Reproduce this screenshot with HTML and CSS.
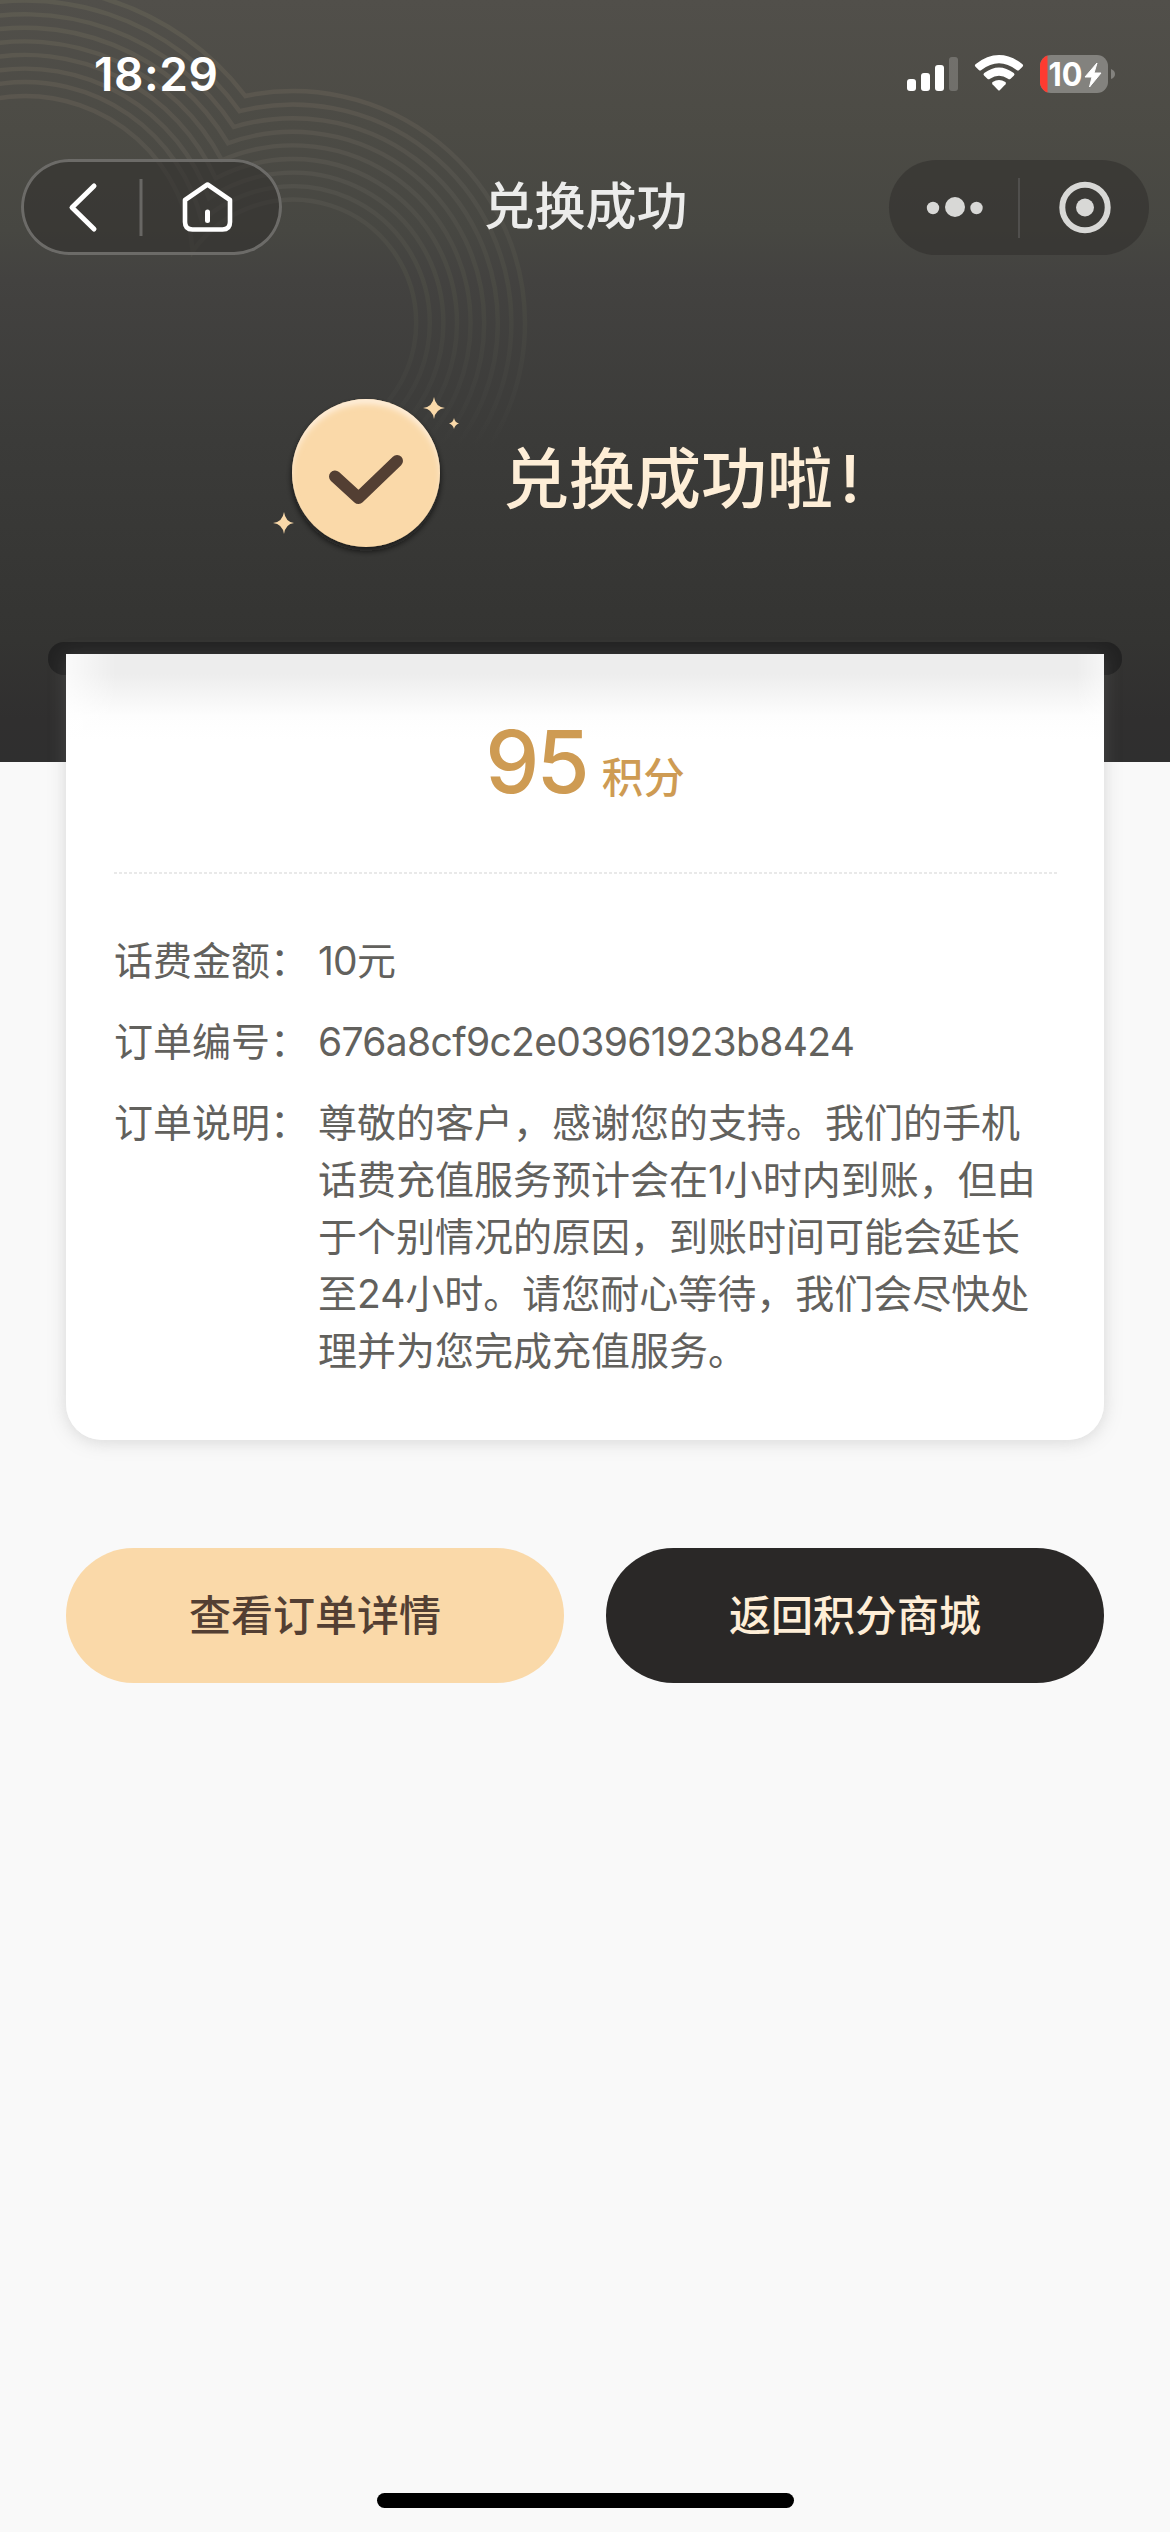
FILE: index.html
```html
<!DOCTYPE html>
<html lang="zh-CN">
<head>
<meta charset="utf-8">
<title>兑换成功</title>
<link rel="stylesheet" href="styles.css">
</head>
<body>
<main class="screen">
  <section class="hero">
    <svg class="rings" width="600" height="480" viewBox="0 0 600 480" aria-hidden="true">
      <defs>
        <linearGradient id="fade" x1="0" y1="0" x2="0" y2="460" gradientUnits="userSpaceOnUse">
          <stop offset="0" stop-color="#5c5a50"/>
          <stop offset=".22" stop-color="#5a564e"/>
          <stop offset=".4" stop-color="#52514b"/>
          <stop offset=".65" stop-color="#484842"/>
          <stop offset=".85" stop-color="#444441" stop-opacity=".5"/>
          <stop offset=".97" stop-color="#444441" stop-opacity="0"/>
        </linearGradient>
      </defs>
      <g fill="none" stroke="url(#fade)" stroke-width="4.4">
        <path d="M-252 264A277 277 0 0 1 245.3 96A232 232 0 0 1 525 323A232 232 0 0 1 293 555"/>
        <path d="M-238.4 264A263.4 263.4 0 0 1 239.6 111.2A218.4 218.4 0 0 1 511.4 323A218.4 218.4 0 0 1 293 541.4"/>
        <path d="M-224.8 264A249.8 249.8 0 0 1 233.8 127A204.8 204.8 0 0 1 497.8 323A204.8 204.8 0 0 1 293 527.8"/>
        <path d="M-211.2 264A236.2 236.2 0 0 1 228 143.2A191.2 191.2 0 0 1 484.2 323A191.2 191.2 0 0 1 293 514.2"/>
        <path d="M-197.6 264A222.6 222.6 0 0 1 221.9 160.2A177.6 177.6 0 0 1 470.6 323A177.6 177.6 0 0 1 293 500.6"/>
        <path d="M-184 264A209 209 0 0 1 215.7 178.4A164 164 0 0 1 457 323A164 164 0 0 1 293 487"/>
        <path d="M-170.4 264A195.4 195.4 0 0 1 209 198.3A150.4 150.4 0 0 1 443.4 323A150.4 150.4 0 0 1 293 473.4"/>
        <path d="M-156.8 264A181.8 181.8 0 0 1 201.7 221.1A136.8 136.8 0 0 1 429.8 323A136.8 136.8 0 0 1 293 459.8"/>
        <path d="M-143.2 264A168.2 168.2 0 0 1 192.7 251.3A123.2 123.2 0 0 1 416.2 323A123.2 123.2 0 0 1 293 446.2"/>
      </g>
    </svg>

    <header class="status">
      <span class="time">18:29</span>
      <svg class="status-icons" width="220" height="46" viewBox="0 0 220 46" role="img" aria-label="信号、Wi-Fi、电量">
        <g fill="#fff">
          <rect x="7" y="27" width="9" height="12" rx="3"/>
          <rect x="21" y="21" width="9" height="18" rx="3"/>
          <rect x="35" y="13" width="9" height="26" rx="3"/>
          <rect x="49" y="5" width="9" height="34" rx="3" opacity=".2"/>
          <path d="M75.500 12.200Q99 -6 122.500 12.200Q123.800 13.500 122.500 14.700L119.200 18Q118 19 116.600 18Q99 4.500 81.400 18Q80 19 78.800 18L75.500 14.700Q74.200 13.500 75.500 12.200Z"/>
          <path d="M84.200 21Q99 9.800 113.800 21Q115.200 22.200 114 23.500L110.600 26.800Q109.400 27.800 108 26.800Q99 20.600 90 26.800Q88.600 27.800 87.400 26.800L84 23.500Q82.800 22.200 84.200 21Z"/>
          <path d="M92.600 30Q99 25.800 105.400 30Q106.600 31 105.500 32.200L100 38Q99 39 98 38L92.500 32.200Q91.400 31 92.600 30Z"/>
        </g>
        <clipPath id="cell"><rect x="140" y="3" width="68" height="38" rx="11"/></clipPath>
        <g clip-path="url(#cell)">
          <rect x="140" y="3" width="68" height="38" fill="#83827e"/>
          <rect x="140" y="3" width="7.500" height="38" fill="#ff3b30"/>
        </g>
        <path d="M211 17Q215 18.500 215 22T211 27Z" fill="#83827e"/>
        <text class="charge" x="148.500" y="34" textLength="34" lengthAdjust="spacingAndGlyphs">10</text>
        <path d="M197 11L185 25H192L189.500 35L201 21H194Z" fill="#fff" stroke="#fff" stroke-width="1" stroke-linejoin="round"/>
      </svg>
    </header>

    <nav class="nav">
      <div class="pill pill-left">
        <svg width="261" height="96" viewBox="0 0 261 96" fill="none" stroke="#fff" stroke-width="5" stroke-linecap="round" stroke-linejoin="round">
          <path d="M73 27L51 48.500L73 70"/>
          <path d="M120 20V77" stroke="#686764" stroke-width="3" stroke-linecap="butt"/>
          <path d="M186.500 25.500L209 41V63Q209 70.500 201.500 70.500H171.500Q164 70.500 164 63V41Z" stroke-width="4.600"/>
          <path d="M186.500 53V61.500"/>
        </svg>
      </div>
      <h1 class="title">兑换成功</h1>
      <div class="pill pill-right">
        <svg width="260" height="95" viewBox="0 0 260 95" fill="#d8d8d6">
          <circle cx="44" cy="48" r="6.200"/>
          <circle cx="66" cy="47" r="10"/>
          <circle cx="87.500" cy="48" r="6.200"/>
          <path d="M130 18V78" stroke="#504f4d" stroke-width="2"/>
          <circle cx="196" cy="47.500" r="22.700" fill="none" stroke="#d8d8d6" stroke-width="6"/>
          <circle cx="196" cy="47.500" r="9"/>
        </svg>
      </div>
    </nav>

    <div class="success">
      <svg width="190" height="176" viewBox="0 0 190 176" aria-hidden="true">
        <defs>
          <filter id="drop" x="-20%" y="-20%" width="140%" height="140%"><feDropShadow dx="0" dy="4" stdDeviation="3" flood-color="#171716" flood-opacity=".75"/></filter>
          <filter id="soft"><feGaussianBlur stdDeviation="3"/></filter>
          <clipPath id="disc"><circle cx="94" cy="83" r="74"/></clipPath>
        </defs>
        <circle cx="94" cy="83" r="74" fill="#fad9a9" filter="url(#drop)"/>
        <g clip-path="url(#disc)"><circle cx="94" cy="89" r="79" fill="none" stroke="#fff2e3" stroke-width="7" filter="url(#soft)"/></g>
        <path d="M63 86.500L86.500 108L125 71" fill="none" stroke="#533f33" stroke-width="12" stroke-linecap="round" stroke-linejoin="round"/>
        <g fill="#fad9a9">
          <path d="M162 7Q163.500 17 173 18Q163.500 19 162 29Q160.500 19 151 18Q160.500 17 162 7Z"/>
          <path d="M182 28Q183 32.500 187 33.500Q183 34.500 182 39Q181 34.500 177 33.500Q181 32.500 182 28Z"/>
          <path d="M12 122Q13.500 132 22 133Q13.500 134 12 144Q10.500 134 1 133Q10.500 132 12 122Z"/>
        </g>
      </svg>
      <p class="success-text">兑换成功啦<span class="bang">!</span></p>
    </div>
    <div class="slot"></div>
  </section>

  <section class="card">
    <p class="points"><span class="points-value">95</span><span class="points-unit">积分</span></p>
    <svg class="divider" width="944" height="2" viewBox="0 0 944 2"><path d="M0 1H944" stroke="#e2e2e2" stroke-width="1.500" stroke-dasharray="3 2"/></svg>
    <dl class="details">
      <dt>话费金额：</dt><dd><span class="amount">10</span>元</dd>
      <dt>订单编号：</dt><dd><span class="order-no">676a8cf9c2e03961923b8424</span></dd>
      <dt>订单说明：</dt>
      <dd>尊敬的客户，感谢您的支持。我们的手机<br>话费充值服务预计会在1小时内到账，但由<br>于个别情况的原因，到账时间可能会延长<br>至24小时。请您耐心等待，我们会尽快处<br>理并为您完成充值服务。</dd>
    </dl>
  </section>

  <div class="actions">
    <button class="btn btn-gold" type="button">查看订单详情</button>
    <button class="btn btn-dark" type="button">返回积分商城</button>
  </div>
  <div class="home-indicator"></div>
</main>
</body>
</html>
```
FILE: styles.css
```css
* { box-sizing: border-box; }

body {
  margin: 0;
  background: #f9f9f9;
  font-family: Inter, "Noto Sans CJK SC", sans-serif;
}

p, h1, dl, dd { margin: 0; }
svg { display: block; flex: none; }

.screen {
  display: flex;
  flex-direction: column;
  width: 1170px;
  height: 2532px;
  overflow: hidden;
}

.hero {
  position: relative;
  display: flex;
  flex-direction: column;
  flex: none;
  height: 762px;
  background: linear-gradient(#514f4a 0, #4c4b45 130px, #474742 230px, #434240 280px, #3b3b39 440px, #343432 640px, #302f2f 720px, #2f2f2f 762px);
}

.rings { position: absolute; left: 0; top: 0; }

.status {
  position: relative;
  display: flex;
  justify-content: space-between;
  height: 159px;
  padding: 51px 50px 0 94px;
}

.status-icons { margin-top: 1px; }

.time {
  color: #fff;
  font-size: 46px;
  font-weight: 600;
  line-height: 46px;
  letter-spacing: .6px;
}

.charge {
  fill: #fff;
  font-size: 33px;
  font-weight: 700;
}

.nav {
  position: relative;
  display: flex;
  justify-content: space-between;
  align-items: center;
  height: 96px;
  padding: 0 21px;
}

.pill { border-radius: 48px; background: rgba(48, 46, 43, .55); }
.pill-left { box-shadow: inset 0 0 0 3px #6c6b68; }

.title {
  color: #ececeb;
  font-size: 51px;
  font-weight: 500;
  line-height: 72px;
}

.success {
  position: relative;
  display: flex;
  align-items: flex-start;
  gap: 41px;
  height: 252px;
  margin: 135px 0 0 272px;
}

.success-text {
  padding-top: 42px;
  color: #feeed7;
  font-size: 66px;
  font-weight: 500;
  line-height: 94px;
}

.bang { margin-left: 7px; }

.slot {
  height: 33px;
  margin: 0 48px;
  border-radius: 16px;
  background: #232323;
}

.card {
  position: relative;
  flex: none;
  width: 1038px;
  height: 786px;
  margin: -108px 66px 0;
  padding: 58px 48px 0;
  border-radius: 0 0 36px 36px;
  background:
    linear-gradient(90deg, rgba(255, 255, 255, .75), rgba(255, 255, 255, 0) 50px, rgba(255, 255, 255, 0) 1010px, rgba(255, 255, 255, .5)) top / 100% 90px no-repeat,
    linear-gradient(#ededed 0, #ededed 20px, #fdfdfd 62px, #fff 85px);
  box-shadow: 0 2px 18px rgba(128, 128, 128, .28);
}

.points {
  display: flex;
  justify-content: center;
  align-items: baseline;
  gap: 15px;
  height: 160px;
  color: #ce9b53;
  line-height: 100px;
}

.points-value { font-size: 86px; font-weight: 500; letter-spacing: -3px; }
.points-unit { font-size: 41.5px; font-weight: 500; }

.details {
  display: grid;
  grid-template-columns: 204px 1fr;
  row-gap: 24px;
  padding-top: 58px;
  color: #62615d;
  font-size: 39px;
  line-height: 57px;
}

dt, dd { white-space: nowrap; }
.order-no { letter-spacing: -.66px; }
.amount { letter-spacing: -.8px; }

.actions {
  display: flex;
  flex: none;
  gap: 42px;
  margin: 108px 66px 0;
}

.btn {
  flex: 1;
  height: 135px;
  padding: 0;
  border: 0;
  border-radius: 68px;
  font: 500 42px/60px Inter, "Noto Sans CJK SC", sans-serif;
}

.btn-gold { background: #fad9a9; color: #533f33; }
.btn-dark { background: #2a2827; color: #feeed7; }

.home-indicator {
  width: 417px;
  height: 15px;
  margin: auto auto 24px;
  border-radius: 8px;
  background: #000;
}
```
